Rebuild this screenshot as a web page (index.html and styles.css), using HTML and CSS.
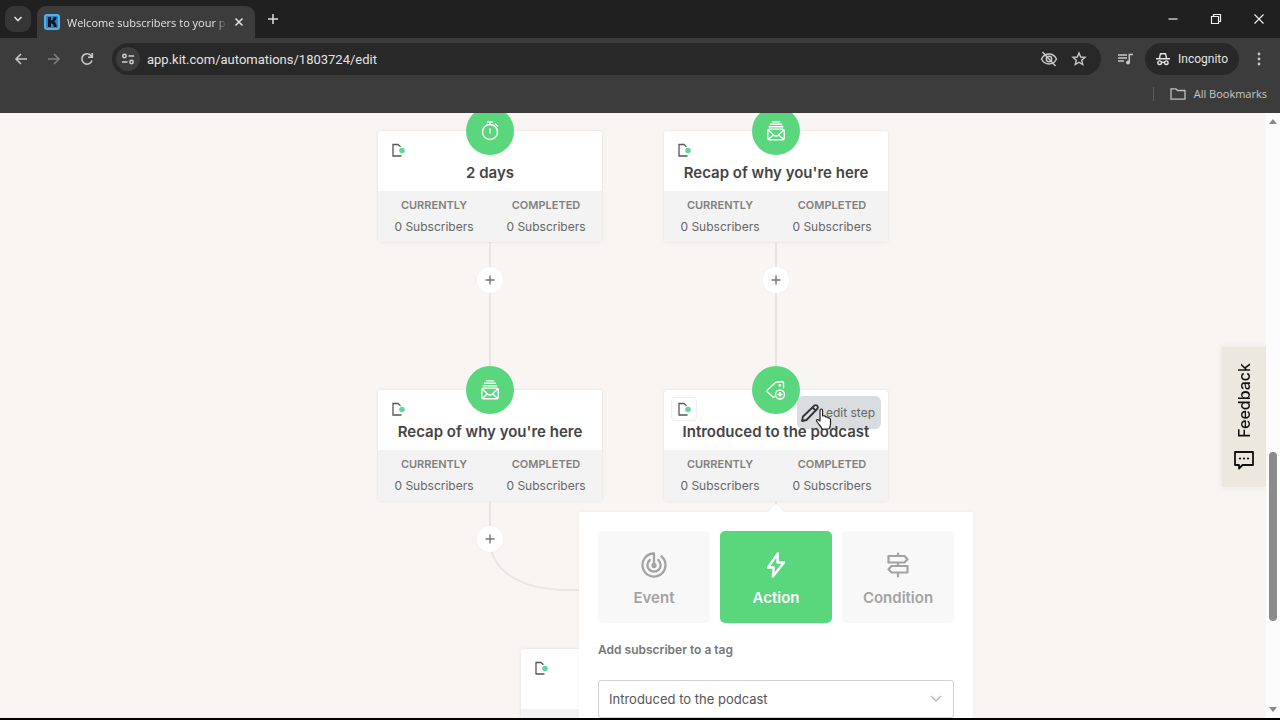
FILE: index.html
```html
<!DOCTYPE html>
<html lang="en">
<head>
  <meta charset="UTF-8" />
  <meta name="viewport" content="width=device-width, initial-scale=1" />
  <title>Welcome subscribers to your podcast</title>
  <link rel="stylesheet" href="styles.css">
</head>
<body>
  <!-- shared icons -->
  <svg class="sprite" aria-hidden="true">
    <symbol id="i-note" viewBox="0 0 16 16">
      <path d="M8.500 2.500H3V14h8.500M8 2.500l2.500 2.200" fill="none" stroke="#555" stroke-width="1.300" />
      <circle cx="12" cy="8.500" r="2.800" fill="#5fd99a" />
    </symbol>
    <symbol id="i-plus" viewBox="0 0 12 12">
      <path d="M6 1.500v9M1.500 6h9" fill="none" stroke="#777" stroke-width="1.400" />
    </symbol>
    <symbol id="i-mail" viewBox="0 0 24 24">
      <g fill="none" stroke="#fff" stroke-width="1.500" stroke-linecap="round" stroke-linejoin="round">
        <path d="M8 2h8M6 4.700h12M4.500 7.400h15" />
        <rect x="3" y="10" width="18" height="11.500" rx="2" />
        <path d="M3.500 11l6 5.500q2.500 2 5 0l6-5.500M3.800 21l4.700-4.200M20.200 21l-4.700-4.200" />
      </g>
    </symbol>
  </svg>

  <header class="browser">
    <div class="tab-strip">
      <button class="tab-search" aria-label="Search tabs">
        <svg width="10" height="10" viewBox="0 0 10 10"><path d="M1.500 3L5 6.500 8.500 3" fill="none" stroke="#ddd" stroke-width="1.600" /></svg>
      </button>
      <div class="tab">
        <svg class="favicon" width="16" height="16" viewBox="0 0 16 16">
          <rect width="16" height="16" rx="3" fill="#5aaee8" />
          <rect x="2" y="2" width="12" height="12" rx="1" fill="#2b86c8" />
          <path d="M4 3h3v3.500c1.500 0 2.300-1.300 2.500-3.500h3c-.2 2-1 3.600-2.300 4.500 1.500.8 2.300 2.500 2.600 5.500H9.700C9.500 10.500 8.700 9.300 7 9.300V13H4z" fill="#0b1826" />
        </svg>
        <span class="tab-title">Welcome subscribers to your podcast</span>
        <button class="tab-close" aria-label="Close tab">
          <svg width="10" height="10" viewBox="0 0 10 10"><path d="M1.500 1.500l7 7M8.500 1.500l-7 7" fill="none" stroke="#e3e3e3" stroke-width="1.500" /></svg>
        </button>
      </div>
      <button class="tab-new" aria-label="New tab">
        <svg width="12" height="12" viewBox="0 0 12 12"><path d="M6 1v10M1 6h10" fill="none" stroke="#ddd" stroke-width="1.500" /></svg>
      </button>
      <div class="window-controls">
        <button aria-label="Minimize"><svg width="12" height="12" viewBox="0 0 12 12"><path d="M1.500 6h9" stroke="#eee" stroke-width="1.200" /></svg></button>
        <button aria-label="Restore"><svg width="12" height="12" viewBox="0 0 12 12"><path d="M1.500 3.500h7v7h-7zM3.500 3.500v-2h7v7h-2" fill="none" stroke="#eee" stroke-width="1.200" /></svg></button>
        <button aria-label="Close"><svg width="12" height="12" viewBox="0 0 12 12"><path d="M1.500 1.500l9 9M10.500 1.500l-9 9" stroke="#eee" stroke-width="1.200" /></svg></button>
      </div>
    </div>

    <div class="toolbar">
      <button class="tool" aria-label="Back">
        <svg width="16" height="16" viewBox="0 0 16 16"><path d="M14 8H3M8 3L3 8l5 5" fill="none" stroke="#c7c7c7" stroke-width="1.600" /></svg>
      </button>
      <button class="tool" aria-label="Forward">
        <svg width="16" height="16" viewBox="0 0 16 16"><path d="M2 8h11M8 3l5 5-5 5" fill="none" stroke="#7e7e7e" stroke-width="1.600" /></svg>
      </button>
      <button class="tool" aria-label="Reload">
        <svg width="16" height="16" viewBox="0 0 16 16"><path d="M13 9.500A5.200 5.200 0 1 1 12 4.500l1 1.500M13.300 2v4.300H9" fill="none" stroke="#c7c7c7" stroke-width="1.600" /></svg>
      </button>
      <div class="address">
        <button class="site-info" aria-label="Site information">
          <svg width="14" height="14" viewBox="0 0 14 14"><g fill="none" stroke="#d0d0d0" stroke-width="1.500"><circle cx="3.500" cy="4" r="1.700" /><path d="M7.500 4H13M1 10h5.500" /><circle cx="10.500" cy="10" r="1.700" /></g></svg>
        </button>
        <input class="url" type="text" value="app.kit.com/automations/1803724/edit" aria-label="Address" />
        <button class="tool" aria-label="Tracking protection">
          <svg width="18" height="18" viewBox="0 0 18 18"><g fill="none" stroke="#c7c7c7" stroke-width="1.500"><path d="M1.500 9C3.200 5.700 6 4 9 4s5.800 1.700 7.500 5c-1.700 3.300-4.500 5-7.500 5s-5.800-1.700-7.500-5z" /><circle cx="9" cy="9" r="2.700" /><path d="M2.500 2l13 14" /></g></svg>
        </button>
        <button class="tool" aria-label="Bookmark this tab">
          <svg width="16" height="16" viewBox="0 0 16 16"><path d="M8 2l1.700 4 4.300.4-3.300 2.800 1 4.300L8 11.200l-3.700 2.300 1-4.300L2 6.400 6.300 6z" fill="none" stroke="#c7c7c7" stroke-width="1.400" /></svg>
        </button>
      </div>
      <button class="tool tool-media" aria-label="Media controls">
        <svg width="18" height="18" viewBox="0 0 18 18"><path d="M2 5h9M2 8h9M2 11h6M13.300 12.500V4.500H17" fill="none" stroke="#c7c7c7" stroke-width="1.500" /><circle cx="12" cy="12.500" r="2" fill="#c7c7c7" /></svg>
      </button>
      <button class="incognito">
        <svg width="14" height="14" viewBox="0 0 14 14"><g fill="none" stroke="#e3e3e3" stroke-width="1.400"><path d="M3.500 6l1-4.300h5l1 4.300M0 6.700h14" /><circle cx="3.700" cy="10.700" r="1.800" /><circle cx="10.300" cy="10.700" r="1.800" /><path d="M5.500 10.300h3" /></g></svg>
        Incognito
      </button>
      <button class="tool tool-menu" aria-label="Menu">
        <svg width="4" height="14" viewBox="0 0 4 14"><g fill="#c7c7c7"><circle cx="2" cy="2" r="1.400" /><circle cx="2" cy="7" r="1.400" /><circle cx="2" cy="12" r="1.400" /></g></svg>
      </button>
    </div>

    <div class="bookmarks">
      <button class="all-bookmarks">
        <svg width="16" height="14" viewBox="0 0 16 14"><path d="M1 1.800h5l1.500 1.700H15v8.700H1z" fill="none" stroke="#c0c0c0" stroke-width="1.300" /></svg>
        All Bookmarks
      </button>
    </div>
  </header>

  <div class="viewport">
    <main class="canvas">
      <div class="branches">
        <div class="branch">
          <article class="node">
            <div class="node-badge">
              <svg width="22" height="22" viewBox="0 0 22 22"><g fill="none" stroke="#fff" stroke-width="1.400" stroke-linecap="round"><circle cx="11" cy="12" r="7.500" /><path d="M8.500 2h5M11 2v2.500M16.500 4l2 2M11 9v4" /></g></svg>
            </div>
            <button class="note" aria-label="Add note"><svg width="16" height="16"><use href="#i-note" /></svg></button>
            <h2>2 days</h2>
            <dl class="stats">
              <div><dt>Currently</dt><dd>0 Subscribers</dd></div>
              <div><dt>Completed</dt><dd>0 Subscribers</dd></div>
            </dl>
          </article>
          <div class="link">
            <button class="add" aria-label="Add step"><svg width="12" height="12"><use href="#i-plus" /></svg></button>
          </div>
          <article class="node">
            <div class="node-badge"><svg width="22" height="22"><use href="#i-mail" /></svg></div>
            <button class="note" aria-label="Add note"><svg width="16" height="16"><use href="#i-note" /></svg></button>
            <h2>Recap of why you're here</h2>
            <dl class="stats">
              <div><dt>Currently</dt><dd>0 Subscribers</dd></div>
              <div><dt>Completed</dt><dd>0 Subscribers</dd></div>
            </dl>
          </article>
        </div>

        <div class="branch">
          <article class="node">
            <div class="node-badge"><svg width="22" height="22"><use href="#i-mail" /></svg></div>
            <button class="note" aria-label="Add note"><svg width="16" height="16"><use href="#i-note" /></svg></button>
            <h2>Recap of why you're here</h2>
            <dl class="stats">
              <div><dt>Currently</dt><dd>0 Subscribers</dd></div>
              <div><dt>Completed</dt><dd>0 Subscribers</dd></div>
            </dl>
          </article>
          <div class="link">
            <button class="add" aria-label="Add step"><svg width="12" height="12"><use href="#i-plus" /></svg></button>
          </div>
          <article class="node active">
            <div class="node-badge">
              <svg width="22" height="22" viewBox="0 0 22 22"><g fill="none" stroke="#fff" stroke-width="1.400" stroke-linecap="round" stroke-linejoin="round"><path d="M9.500 18H8L2.500 13q-1-1 0-2L10.500 3.500 17 2.500q1.500 0 1.500 1.500V9" /><circle cx="14.800" cy="6.300" r=".7" /><circle cx="15" cy="15.500" r="4.500" /><path d="M15 13.500v4M13 15.500h4" /></g></svg>
            </div>
            <button class="note" aria-label="Add note"><svg width="16" height="16"><use href="#i-note" /></svg></button>
            <button class="edit-step">
              <svg width="20" height="20" viewBox="0 0 20 20"><path d="M2 18l1-4.500L14.500 2.500q1.500-1 2.800.3t.3 2.700L6.500 17zM12.500 4.500l3.500 3.500" fill="none" stroke="#333" stroke-width="1.800" stroke-linejoin="round" /></svg>
              edit step
            </button>
            <svg class="cursor" width="18" height="22" viewBox="0 0 18 22" aria-hidden="true"><path d="M5 13V2.500q0-1.500 1.300-1.500t1.300 1.500V8q2.500-.8 3 1 2-.5 2.500 1 2.400-.3 2.400 2v4q0 2.500-1.500 5H7q-1-2.500-3-4.500L1.500 13q-.3-1.700 1.300-1.500z" fill="#fff" stroke="#222" stroke-width="1.200" stroke-linejoin="round" /></svg>
            <h2>Introduced to the podcast</h2>
            <dl class="stats">
              <div><dt>Currently</dt><dd>0 Subscribers</dd></div>
              <div><dt>Completed</dt><dd>0 Subscribers</dd></div>
            </dl>

            <form class="popover">
              <div class="types">
                <button type="button" class="type">
                  <svg width="28" height="28" viewBox="0 0 28 28"><g fill="none" stroke="#a3a3a3" stroke-width="2.300" stroke-linecap="round" stroke-linejoin="round"><path d="M14 14V2.500A11.500 11.500 0 1 0 21.500 5.300" /><path d="M9.800 9A6.600 6.600 0 1 0 18.200 9" /><circle cx="14" cy="14.500" r="1.500" /></g></svg>
                  Event
                </button>
                <button type="button" class="type selected">
                  <svg width="28" height="28" viewBox="0 0 28 28"><path d="M15.800 2.500L6 16.500h5.800l-1 9L22 11.500h-6.500z" fill="none" stroke="#fff" stroke-width="2.400" stroke-linejoin="round" /></svg>
                  Action
                </button>
                <button type="button" class="type">
                  <svg width="28" height="28" viewBox="0 0 28 28"><g fill="none" stroke="#a3a3a3" stroke-width="2.200" stroke-linejoin="round" stroke-linecap="round"><path d="M14 2.500V5M14 11.500V15M14 21.500v4M4.500 5h16l3 3.200-3 3.300h-16zM7.500 15h16v6.500h-16l-3-3.200z" /></g></svg>
                  Condition
                </button>
              </div>
              <label for="tag">Add subscriber to a tag</label>
              <div class="select">
                <select id="tag"><option>Introduced to the podcast</option></select>
                <svg width="12" height="8" viewBox="0 0 12 8"><path d="M1 1l5 5 5-5" fill="none" stroke="#bbb" stroke-width="1.500" /></svg>
              </div>
            </form>
          </article>
        </div>
      </div>

      <div class="merge">
        <svg width="510" height="148" viewBox="0 0 510 148"><path d="M112 0v38c0 34 34 51 78 51h65v59M398 0v38c0 34-34 51-78 51h-65" fill="none" stroke="#e9e5e4" stroke-width="2" /></svg>
        <button class="add" aria-label="Add step"><svg width="12" height="12"><use href="#i-plus" /></svg></button>
      </div>

      <article class="node">
        <button class="note" aria-label="Add note"><svg width="16" height="16"><use href="#i-note" /></svg></button>
        <h2></h2>
        <dl class="stats"></dl>
      </article>

      <button class="feedback">
        <svg width="22" height="22" viewBox="0 0 22 22"><path d="M2 3h18v13H9.500L6 19.500V16H2z" fill="none" stroke="#111" stroke-width="1.800" stroke-linejoin="round" /><g fill="#111"><circle cx="7" cy="9.500" r="1.100" /><circle cx="11" cy="9.500" r="1.100" /><circle cx="15" cy="9.500" r="1.100" /></g></svg>
        <span>Feedback</span>
      </button>
    </main>

    <div class="scrollbar" aria-hidden="true">
      <svg width="8" height="5" viewBox="0 0 8 5"><path d="M0 5l4-5 4 5z" fill="#888" /></svg>
      <div class="track"><div class="thumb"></div></div>
      <svg width="8" height="5" viewBox="0 0 8 5"><path d="M0 0l4 5 4-5z" fill="#888" /></svg>
    </div>
  </div>
</body>
</html>
```
FILE: styles.css
```css
/* Reset */
* {
  box-sizing: border-box;
  margin: 0;
  padding: 0;
}
body {
  height: 100vh;
  display: flex;
  flex-direction: column;
  overflow: hidden;
  font-family: Inter, sans-serif;
  background: #f9f5f3;
  border-bottom: 2px solid #000;
}
button, input, select {
  font: inherit;
  color: inherit;
  border: none;
  background: none;
}
button {
  display: flex;
  align-items: center;
  justify-content: center;
  cursor: pointer;
}
svg {
  flex: none;
}
.sprite {
  position: absolute;
  width: 0;
  height: 0;
}

/* Browser chrome */
.browser {
  flex: none;
  font-family: "Open Sans", "Noto Sans", sans-serif;
  font-size: 11px;
  color: #e3e3e3;
  background: #3c3c3c;
}
.tab-strip {
  display: flex;
  align-items: center;
  height: 38px;
  padding-left: 5px;
  background: #202020;
}
.tab-search {
  width: 26px;
  height: 26px;
  border-radius: 9px;
  background: #363636;
}
.tab {
  align-self: flex-end;
  display: flex;
  align-items: center;
  width: 218px;
  height: 32px;
  margin-left: 6px;
  padding: 0 8px 0 7px;
  border-radius: 9px 9px 0 0;
  background: #3c3c3c;
}
.tab-title {
  flex: 1;
  margin-left: 7px;
  overflow: hidden;
  white-space: nowrap;
  -webkit-mask-image: linear-gradient(90deg, #000 92%, transparent);
  mask-image: linear-gradient(90deg, #000 92%, transparent);
}
.tab-close {
  width: 16px;
  height: 16px;
  margin-left: 4px;
}
.tab-new {
  width: 26px;
  height: 26px;
  margin-left: 5px;
}
.window-controls {
  display: flex;
  margin-left: auto;
}
.window-controls button {
  width: 43px;
  height: 38px;
}
.toolbar {
  display: flex;
  align-items: center;
  height: 42px;
  padding: 0 7px;
}
.tool {
  width: 28px;
  height: 28px;
  margin-right: 5px;
}
.address {
  flex: 1;
  display: flex;
  align-items: center;
  height: 32px;
  margin-left: 6px;
  padding-left: 4px;
  border-radius: 16px;
  background: #282828;
}
.address .tool {
  margin-right: 2px;
}
.address .tool:last-child {
  margin-right: 8px;
}
.site-info {
  width: 24px;
  height: 24px;
  border-radius: 50%;
  background: #3c3c3c;
}
.url {
  flex: 1;
  margin-left: 7px;
  font-family: Roboto, "Open Sans", sans-serif;
  font-size: 13px;
  outline: none;
}
.tool-media {
  margin: 0 6px 0 10px;
}
.incognito {
  gap: 8px;
  height: 32px;
  padding: 0 11px;
  border-radius: 16px;
  background: #282828;
  font-family: Roboto, "Open Sans", sans-serif;
  font-size: 12px;
}
.tool-menu {
  margin: 0 0 0 6px;
}
.bookmarks {
  display: flex;
  align-items: center;
  justify-content: flex-end;
  height: 33px;
  padding: 0 13px 6px 0;
}
.all-bookmarks {
  gap: 8px;
  padding-left: 16px;
  border-left: 1px solid #5c5c5c;
  line-height: 14px;
  color: #c7c7c7;
}

/* Automation canvas */
.viewport {
  flex: 1;
  display: flex;
  min-height: 0;
}
.canvas {
  position: relative;
  flex: 1;
  display: flex;
  flex-direction: column;
  align-items: center;
  padding-top: 18px;
  overflow: hidden;
}
.branches {
  display: flex;
  gap: 62px;
}
.node {
  position: relative;
  flex: none;
  display: flex;
  flex-direction: column;
  width: 224px;
  background: #fff;
  border-radius: 3px;
  box-shadow: 0 0 3px rgba(0, 0, 0, 0.1);
  color: #444;
}
.node-badge {
  position: absolute;
  z-index: 1;
  top: -24px;
  left: 50%;
  display: flex;
  align-items: center;
  justify-content: center;
  width: 48px;
  height: 48px;
  transform: translateX(-50%);
  border-radius: 50%;
  background: #5ad67d;
}
.note {
  width: 26px;
  height: 24px;
  margin: 7px 0 0 7px;
  border: 1px solid transparent;
  border-radius: 4px;
}
.active .note {
  border-color: #eee;
}
.node h2 {
  position: relative;
  height: 29px;
  font-size: 15px;
  font-weight: 600;
  line-height: 22px;
  text-align: center;
  white-space: nowrap;
}
.stats {
  display: flex;
  height: 51px;
  padding-top: 4px;
  background: #f3f3f3;
  border-radius: 0 0 3px 3px;
  text-align: center;
}
.stats div {
  flex: 1;
}
.stats dt {
  font-size: 11px;
  font-weight: 600;
  line-height: 20px;
  text-transform: uppercase;
  color: #808080;
}
.stats dd {
  font-size: 12px;
  line-height: 24px;
  color: #666;
}
.link {
  height: 148px;
  padding-top: 25px;
  background: linear-gradient(#e9e5e4, #e9e5e4) center / 2px 100% no-repeat;
}
.add {
  width: 26px;
  height: 26px;
  margin: 0 auto;
  border-radius: 50%;
  background: #fff;
  box-shadow: 0 0 3px rgba(0, 0, 0, 0.04);
}
.merge {
  position: relative;
  height: 148px;
}
.merge .add {
  position: absolute;
  top: 25px;
  left: 99px;
}
.edit-step {
  position: absolute;
  top: 6px;
  right: 7px;
  gap: 6px;
  height: 33px;
  padding: 0 6px 0 3px;
  border-radius: 6px;
  background: #d9dddf;
  font-size: 12px;
  color: #666;
}
.cursor {
  position: absolute;
  z-index: 2;
  top: 18px;
  right: 55px;
}

/* Step editor */
.popover {
  position: absolute;
  z-index: 3;
  top: calc(100% + 11px);
  left: 50%;
  display: flex;
  flex-direction: column;
  width: 394px;
  padding: 19px 19px 40px;
  transform: translateX(-50%);
  background: #fff;
  box-shadow: 0 0 4px rgba(0, 0, 0, 0.04);
}
.popover::before {
  content: "";
  position: absolute;
  top: -8px;
  left: 50%;
  transform: translateX(-50%);
  border: 8px solid transparent;
  border-top: none;
  border-bottom-color: #fff;
}
.types {
  display: flex;
  gap: 10px;
}
.type {
  flex: 1;
  flex-direction: column;
  gap: 9px;
  height: 92px;
  padding-top: 4px;
  border-radius: 5px;
  background: #f8f8f8;
  font-size: 15px;
  font-weight: 600;
  color: #a3a3a3;
}
.type.selected {
  background: #5ad67d;
  color: #fff;
}
.popover label {
  margin: 19px 0 22px;
  font-size: 12px;
  font-weight: 600;
  line-height: 16px;
  color: #777;
}
.select {
  display: flex;
  align-items: center;
}
.select select {
  flex: 1;
  height: 38px;
  padding: 0 10px;
  appearance: none;
  border: 1px solid #d2d2d2;
  border-radius: 3px;
  font-size: 13px;
  color: #555;
}
.select svg {
  margin-left: -24px;
  margin-right: 12px;
  pointer-events: none;
}

/* Feedback tab */
.feedback {
  position: absolute;
  top: 234px;
  right: 0;
  gap: 12px;
  flex-direction: column-reverse;
  width: 44px;
  height: 140px;
  background: #ece8e0;
  box-shadow: 0 0 6px rgba(0, 0, 0, 0.08);
  font-size: 16px;
  font-weight: 500;
  color: #111;
}
.feedback span {
  writing-mode: vertical-rl;
  transform: rotate(180deg);
}

/* Scrollbar */
.scrollbar {
  flex: none;
  display: flex;
  flex-direction: column;
  align-items: center;
  width: 14px;
  padding: 6px 0;
  background: #fcfcfc;
}
.track {
  flex: 1;
  display: flex;
  flex-direction: column;
  justify-content: flex-end;
  padding-bottom: 86px;
}
.thumb {
  width: 8px;
  height: 34%;
  border-radius: 4px;
  background: #8b8b8b;
}
```
